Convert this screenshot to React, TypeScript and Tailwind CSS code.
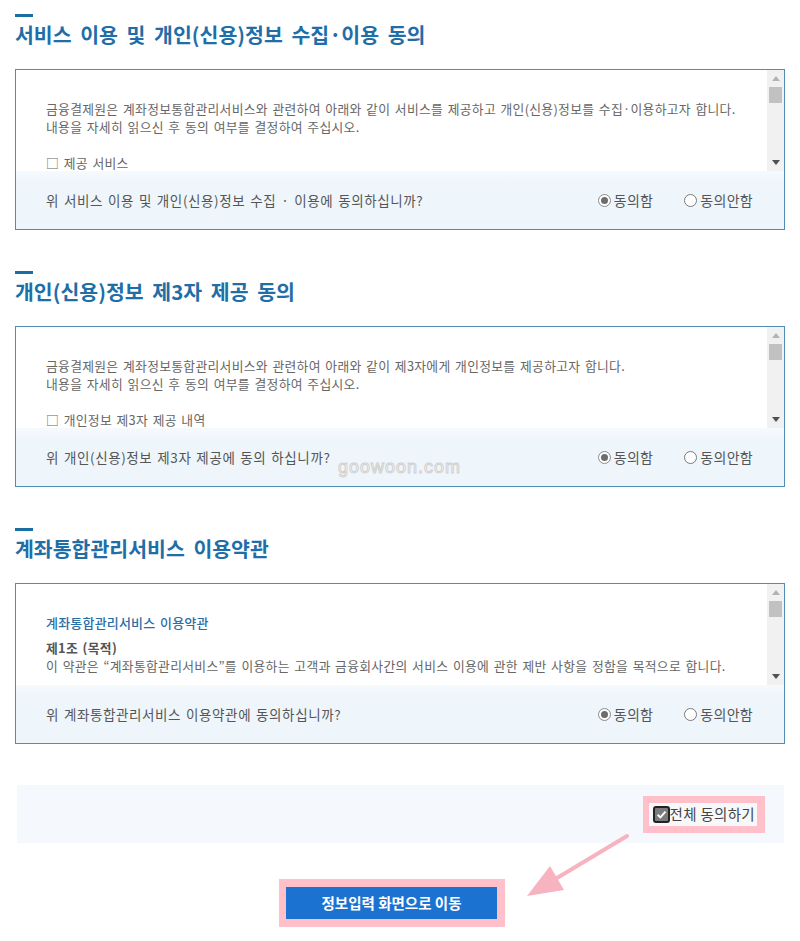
import React from "react";

const FONT = "font-['Noto_Sans_CJK_KR','Noto_Sans',sans-serif]";

function Scrollbar() {
  return (
    <div className="w-[17px] bg-[#f1f1f1] flex flex-col shrink-0">
      <div className="h-[17px] flex items-center justify-center">
        <svg width="8" height="5" viewBox="0 0 8 5">
          <path d="M0 5 L4 0 L8 5 Z" fill="#b3b3b3" />
        </svg>
      </div>
      <div className="h-[16px] mx-[2px] bg-[#c1c1c1]" />
      <div className="flex-1" />
      <div className="h-[17px] flex items-center justify-center">
        <svg width="8" height="5" viewBox="0 0 8 5">
          <path d="M0 0 L8 0 L4 5 Z" fill="#505050" />
        </svg>
      </div>
    </div>
  );
}

function Radio({ checked, label }: { checked: boolean; label: string }) {
  return (
    <label className="flex items-center gap-[3px] text-[14px] tracking-[0.3px] text-[#555]">
      {checked ? (
        <span className="w-[13px] h-[13px] rounded-full border border-[#8a8a8a] bg-white flex items-center justify-center">
          <span className="w-[7px] h-[7px] rounded-full bg-[#6d6d6d]" />
        </span>
      ) : (
        <span className="w-[13px] h-[13px] rounded-full border border-[#7a7a7a] bg-white" />
      )}
      <span>{label}</span>
    </label>
  );
}

function Section({
  title,
  question,
  children,
  first,
}: {
  title: string;
  question: string;
  children: React.ReactNode;
  first?: boolean;
}) {
  return (
    <section className={first ? "" : "mt-[41px]"}>
      <div className="h-[3px] w-[18px] bg-[#1a6ea3]" />
      <h2 className="mt-[3px] text-[20.5px] leading-[28px] font-bold text-[#1f6ea8] [word-spacing:4px]">
        {title}
      </h2>
      <div className="mt-[21px] h-[161px] border-[1.5px] border-[#4f8db5] flex flex-col bg-white">
        <div className="flex h-[101px]">
          <div className="flex-1 overflow-hidden pl-[30px] pt-[30px] text-[12.8px] leading-[18px] text-[#666] tracking-[0.3px] [word-spacing:1.4px] whitespace-nowrap">
            {children}
          </div>
          <Scrollbar />
        </div>
        <div className="flex-1 flex items-center justify-between pl-[30px] pr-[31px] bg-[linear-gradient(to_bottom,#f6fafd_0px,#eef5fb_12px,#eff6fb_100%)]">
          <span className="text-[13.5px] text-[#555] tracking-[0.6px] [word-spacing:1.3px]">{question}</span>
          <div className="flex items-center gap-[31px]">
            <Radio checked label="동의함" />
            <Radio checked={false} label="동의안함" />
          </div>
        </div>
      </div>
    </section>
  );
}

export default function App() {
  return (
    <div className={`relative w-[800px] min-h-[941px] bg-white ${FONT}`}>
      <div className="px-[15px] pt-[14px]">
        <Section
          first
          title="서비스 이용 및 개인(신용)정보 수집·이용 동의"
          question="위 서비스 이용 및 개인(신용)정보 수집 · 이용에 동의하십니까?"
        >
          <p>
            금융결제원은 계좌정보통합관리서비스와 관련하여 아래와 같이 서비스를 제공하고 개인(신용)정보를 수집·이용하고자 합니다.
          </p>
          <p>내용을 자세히 읽으신 후 동의 여부를 결정하여 주십시오.</p>
          <p className="mt-[18px]">□ 제공 서비스</p>
        </Section>

        <Section
          title="개인(신용)정보 제3자 제공 동의"
          question="위 개인(신용)정보 제3자 제공에 동의 하십니까?"
        >
          <p>
            금융결제원은 계좌정보통합관리서비스와 관련하여 아래와 같이 제3자에게 개인정보를 제공하고자 합니다.
          </p>
          <p>내용을 자세히 읽으신 후 동의 여부를 결정하여 주십시오.</p>
          <p className="mt-[18px]">□ 개인정보 제3자 제공 내역</p>
        </Section>

        <Section
          title="계좌통합관리서비스 이용약관"
          question="위 계좌통합관리서비스 이용약관에 동의하십니까?"
        >
          <p className="text-[13px] font-medium text-[#2a6ea8] tracking-[0.2px]">계좌통합관리서비스 이용약관</p>
          <p className="mt-[7px] font-bold text-[#555]">제1조 (목적)</p>
          <p>
            이 약관은 “계좌통합관리서비스”를 이용하는 고객과 금융회사간의 서비스 이용에 관한 제반 사항을 정함을 목적으로 합니다.
          </p>
        </Section>

        <div className="mt-[41px] ml-[2px] mr-[1px] h-[58px] bg-[#f5f8fd] flex items-center justify-end pr-[19px]">
          <div className="bg-[#ffc0c9] pl-[6px] pr-[8px] py-[7px]">
            <label className="flex items-center bg-[#f7f8fa] pl-[4px] pr-[2px] h-[23px] text-[14.5px] tracking-[0.3px] text-[#444]">
              <span className="w-[17px] h-[17px] rounded-[3px] border-2 border-[#222] bg-[#7b7b7b] flex items-center justify-center">
                <svg width="11" height="11" viewBox="0 0 10 10">
                  <path d="M1.5 5.2 L4 7.6 L8.6 2.4" stroke="#fff" strokeWidth="1.8" fill="none" />
                </svg>
              </span>
              <span>전체 동의하기</span>
            </label>
          </div>
        </div>

        <div className="mt-[36px] flex justify-center">
          <div className="mr-[16px] bg-[#ffc0c9] pl-[7px] pr-[8px] py-[8px]">
            <button className="w-[211px] h-[32px] bg-[#1b72d1] text-white text-[14.5px] font-bold">
              정보입력 화면으로 이동
            </button>
          </div>
        </div>
      </div>

      <div className="absolute left-[338px] top-[456px] text-[18px] leading-[22px] tracking-[1px] font-['Liberation_Sans',sans-serif] text-white [-webkit-text-stroke:1px_#d0d0d0] pointer-events-none">
        goowoon.com
      </div>

      <svg
        className="absolute left-0 top-0 pointer-events-none"
        width="800"
        height="941"
        viewBox="0 0 800 941"
      >
        <line x1="627" y1="836" x2="552" y2="881" stroke="#f7b3c0" strokeWidth="4" strokeLinecap="round" />
        <path d="M527 896 L564 890 L550 866 Z" fill="#f7b3c0" />
      </svg>
    </div>
  );
}
